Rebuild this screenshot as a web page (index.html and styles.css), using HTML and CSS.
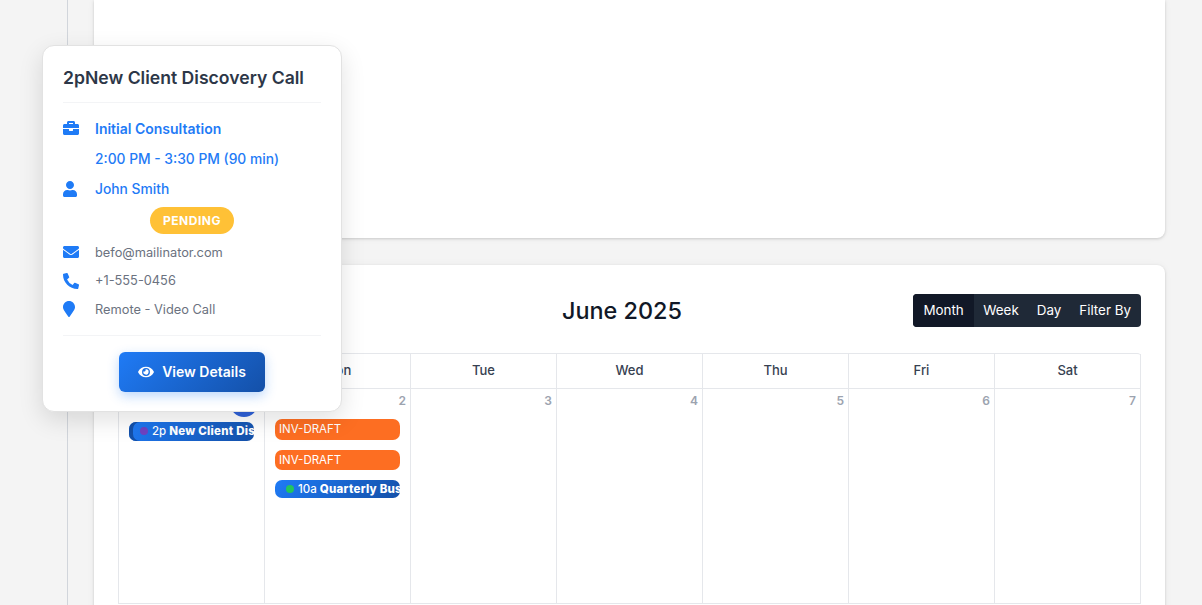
FILE: index.html
```html
<!DOCTYPE html>
<html lang="en">
<head>
<meta charset="utf-8">
<title>Calendar</title>
<link rel="stylesheet" href="styles.css">
</head>
<body>
<div class="shell">
  <aside class="rail"></aside>
  <main class="main">
    <section class="card card-top"></section>
    <section class="card card-cal">
      <div class="toolbar">
        <div class="toolbar-left"></div>
        <h2 class="month-title">June 2025</h2>
        <div class="views">
          <button class="view active">Month</button>
          <button class="view">Week</button>
          <button class="view">Day</button>
          <button class="view">Filter By</button>
        </div>
      </div>
      <div class="calendar">
        <div class="dow">Sun</div><div class="dow">Mon</div><div class="dow">Tue</div><div class="dow">Wed</div><div class="dow">Thu</div><div class="dow">Fri</div><div class="dow">Sat</div>
        <div class="day day-first">
          <div class="num today">1</div>
          <div class="ev ev-blue ev-first"><span class="dot dot-purple"></span><span class="ev-time">2p</span> <b>New Client Discovery Call</b></div>
        </div>
        <div class="day">
          <div class="num">2</div>
          <div class="ev ev-orange">INV-DRAFT</div>
          <div class="ev ev-orange">INV-DRAFT</div>
          <div class="ev ev-blue"><span class="dot dot-green"></span><span class="ev-time">10a</span> <b>Quarterly Business Review</b></div>
        </div>
        <div class="day"><div class="num">3</div></div>
        <div class="day"><div class="num">4</div></div>
        <div class="day"><div class="num">5</div></div>
        <div class="day"><div class="num">6</div></div>
        <div class="day"><div class="num">7</div></div>
      </div>
    </section>
  </main>
</div>

<div class="popover">
  <h3 class="pop-title">2pNew Client Discovery Call</h3>
  <div class="pop-body">
    <div class="pop-row pop-blue pop-first">
      <svg class="ico" viewBox="0 0 512 512"><path d="M320 336c0 8.84-7.16 16-16 16h-96c-8.84 0-16-7.16-16-16v-48H0v144c0 25.6 22.4 48 48 48h416c25.6 0 48-22.4 48-48V288H320v48zm144-208h-80V80c0-25.6-22.4-48-48-48H176c-25.6 0-48 22.4-48 48v48H48c-25.6 0-48 22.4-48 48v80h512v-80c0-25.6-22.4-48-48-48zm-144 0H192V96h128v32z"/></svg>
      <span class="strong">Initial Consultation</span>
    </div>
    <div class="pop-row pop-blue"><span class="ico"></span><span>2:00 PM - 3:30 PM (90 min)</span></div>
    <div class="pop-row pop-blue">
      <svg class="ico ico-user" viewBox="0 0 448 512"><path d="M224 256c70.7 0 128-57.3 128-128S294.7 0 224 0 96 57.3 96 128s57.3 128 128 128zm89.6 32h-16.7c-22.2 10.2-46.9 16-72.9 16s-50.6-5.8-72.9-16h-16.7C60.2 288 0 348.2 0 422.4V464c0 26.5 21.5 48 48 48h352c26.5 0 48-21.5 48-48v-41.6c0-74.2-60.2-134.4-134.4-134.4z"/></svg>
      <span>John Smith</span>
    </div>
    <div class="pop-status"><span class="badge">PENDING</span></div>
    <div class="pop-row pop-gray">
      <svg class="ico" viewBox="0 0 512 512"><path d="M502.3 190.8c3.9-3.1 9.7-.2 9.7 4.7V400c0 26.5-21.5 48-48 48H48c-26.5 0-48-21.5-48-48V195.6c0-5 5.7-7.8 9.7-4.7 22.4 17.4 52.1 39.5 154.1 113.6 21.1 15.4 56.7 47.8 92.2 47.6 35.7.3 72-32.8 92.3-47.6 102-74.1 131.6-96.3 154-113.7zM256 320c23.2.4 56.6-29.2 73.4-41.4 132.7-96.3 142.8-104.7 173.4-128.7 5.8-4.5 9.2-11.5 9.2-18.9v-19c0-26.5-21.5-48-48-48H48C21.5 64 0 85.5 0 112v19c0 7.4 3.4 14.3 9.2 18.9 30.6 23.9 40.7 32.4 173.4 128.7 16.8 12.2 50.2 41.8 73.4 41.4z"/></svg>
      <span>befo@mailinator.com</span>
    </div>
    <div class="pop-row pop-gray">
      <svg class="ico" viewBox="0 0 512 512"><path d="M14.6 361.8l112-48a24 24 0 0 1 28 6.9l49.6 60.6A370.66 370.66 0 0 0 381.4 204.1l-60.6-49.6a23.94 23.94 0 0 1-6.9-28l48-112A24.16 24.16 0 0 1 389.4.6l104 24A24 24 0 0 1 512 48c0 256.5-207.9 464-464 464a24 24 0 0 1-23.4-18.6l-24-104a24.29 24.29 0 0 1 14-27.6z" transform="matrix(-1 0 0 1 512 0)"/></svg>
      <span>+1-555-0456</span>
    </div>
    <div class="pop-row pop-gray">
      <svg class="ico ico-pin" viewBox="0 0 384 512"><path d="M172.268 501.67C26.97 291.031 0 268.413 0 192 0 85.961 85.961 0 192 0s192 85.961 192 192c0 76.413-26.97 99.031-172.268 309.67-9.535 13.774-29.93 13.773-39.464 0z"/></svg>
      <span>Remote - Video Call</span>
    </div>
  </div>
  <div class="pop-foot">
    <button class="details">
      <svg class="ico-eye" viewBox="0 0 576 512"><path d="M572.52 241.4C518.29 135.59 410.93 64 288 64S57.68 135.64 3.48 241.41a32.35 32.35 0 0 0 0 29.19C57.71 376.41 165.07 448 288 448s230.32-71.64 284.52-177.41a32.35 32.35 0 0 0 0-29.19zM288 400a144 144 0 1 1 144-144 143.93 143.93 0 0 1-144 144zm0-240a95.31 95.31 0 0 0-25.31 3.79 47.85 47.85 0 0 1-66.9 66.9A95.78 95.78 0 1 0 288 160z"/></svg>
      View Details
    </button>
  </div>
</div>
</body>
</html>
```

FILE: styles.css
```css
* { box-sizing: border-box; }
html, body { margin: 0; height: 100%; overflow: hidden; }
body {
  background: #f4f4f4;
  font-family: Inter, "Liberation Sans", sans-serif;
  color: #111827;
}
.shell { display: flex; height: 605px; overflow: hidden; }
.rail {
  width: 68px;
  flex: none;
  border-right: 1px solid #d1d5db;
}
.main {
  flex: 1;
  min-width: 0;
  padding: 0 37px 0 26px;
}
.card {
  background: #fff;
  border-radius: 8px;
  box-shadow: 0 1px 3px rgba(0, 0, 0, .16), 0 0 8px rgba(0, 0, 0, .04);
}
.card-top { height: 238px; border-radius: 0 0 8px 8px; margin-bottom: 27px; }
.card-cal { padding: 29px 24px 0; height: 500px; }
.toolbar {
  display: flex;
  justify-content: space-between;
  align-items: center;
  height: 33px;
  margin-bottom: 26px;
}
.toolbar-left { width: 213px; }
.month-title { margin: 0; font-size: 23.4px; font-weight: 500; color: #111827; line-height: 33px; }
.views { display: flex; border-radius: 4px; overflow: hidden; background: #1f2937; }
.view {
  border: 0;
  background: transparent;
  color: #fff;
  font: 400 13.4px/33px Inter, sans-serif;
  height: 33px;
  padding: 0 9px;
}
.view.active { background: #111827; padding: 0 10.5px; }
.view:last-child { padding-right: 10px; }
.calendar {
  display: grid;
  grid-template-columns: repeat(7, 146px);
  grid-template-rows: 35px 215px;
  width: 1023px;
  border-top: 1px solid #e5e7eb;
  border-left: 1px solid #e5e7eb;
  border-radius: 4px 4px 0 0;
}
.dow {
  border-right: 1px solid #e5e7eb;
  border-bottom: 1px solid #e5e7eb;
  text-align: center;
  font-size: 13px;
  font-weight: 500;
  line-height: 33px;
  color: #374151;
}
.day {
  border-right: 1px solid #e5e7eb;
  border-bottom: 1px solid #e5e7eb;
  padding: 0 10px;
}
.num {
  height: 24px;
  text-align: right;
  font-size: 12px;
  font-weight: 600;
  line-height: 24px;
  color: #9ca3af;
  margin-right: -6px;
}
.num.today {
  width: 28px;
  height: 28px;
  margin: 0 -4px 0 auto;
  border-radius: 50%;
  background: #2f62d9;
  color: #fff;
  text-align: center;
  line-height: 28px;
}
.ev {
  margin: 6px 0 0;
  padding: 0 4px;
  border-radius: 7px;
  color: #fff;
  font-size: 11.5px;
  white-space: nowrap;
  overflow: hidden;
}
.ev-orange { height: 20.5px; line-height: 20px; margin-bottom: 10px; background: #fd6e22; }
.ev-orange + .ev-orange { margin-top: 0; }
.ev-orange + .ev-blue { margin-top: 0; }
.ev-blue {
  height: 18px;
  line-height: 18px;
  padding-left: 11px;
  background: linear-gradient(135deg, #1f7bf6, #1450a8);
  font-weight: 500;
}
.ev-blue b { font-weight: 800; letter-spacing: .25px; }
.ev-first { height: 19px; line-height: 19px; margin-top: 5px; box-shadow: inset 4px 0 0 #1450a8; }
.dot {
  display: inline-block;
  width: 8px;
  height: 8px;
  border-radius: 50%;
  margin-right: 4px;
}
.dot-purple { background: #6f42c1; }
.dot-green { background: #22c55e; }

.popover {
  position: absolute;
  left: 42px;
  top: 45px;
  width: 300px;
  height: 367px;
  padding: 21px 20px 0;
  background: #fff;
  border: 1px solid #e2e2e2;
  border-radius: 12px;
  box-shadow: 0 8px 24px rgba(0, 0, 0, .12);
}
.pop-title {
  margin: 0;
  height: 36px;
  border-bottom: 1px solid #f3f4f6;
  font-size: 17.6px;
  font-weight: 600;
  line-height: 22px;
  color: #2d3748;
}
.pop-body { padding-top: 10px; }
.pop-row { display: flex; align-items: center; height: 30px; font-size: 14px; }
.pop-blue { color: #1f7bf6; font-weight: 500; font-size: 13.8px; }
.pop-blue .strong { font-size: 14px; font-weight: 600; }
.pop-first { height: 31px; padding-bottom: 1px; }
.pop-gray { height: 28.5px; color: #6b7280; font-size: 12.8px; }
.ico { width: 16px; height: 16px; flex: none; margin-right: 16px; fill: #1f7bf6; }
.ico-user { width: 14px; margin-right: 18px; }
.ico-pin { width: 12px; margin-right: 20px; }
.pop-status { display: flex; justify-content: center; padding: 3px 0 4px; }
.badge {
  height: 27px;
  padding: 0 12.75px;
  border-radius: 14px;
  background: #ffc136;
  color: #fff;
  font-size: 12px;
  font-weight: 700;
  letter-spacing: .5px;
  line-height: 27px;
}
.pop-foot {
  margin-top: 11px;
  padding-top: 16px;
  border-top: 1px solid #f3f4f6;
  display: flex;
  justify-content: center;
}
.details {
  display: flex;
  align-items: center;
  gap: 8px;
  height: 40px;
  padding: 0 19.5px;
  border: 0;
  border-radius: 6px;
  background: linear-gradient(135deg, #1f7bf6, #1450a8);
  color: #fff;
  font: 600 14px Inter, sans-serif;
  box-shadow: 0 4px 12px rgba(31, 123, 246, .3);
}
.ico-eye { width: 16px; height: 14px; fill: #fff; }
```
